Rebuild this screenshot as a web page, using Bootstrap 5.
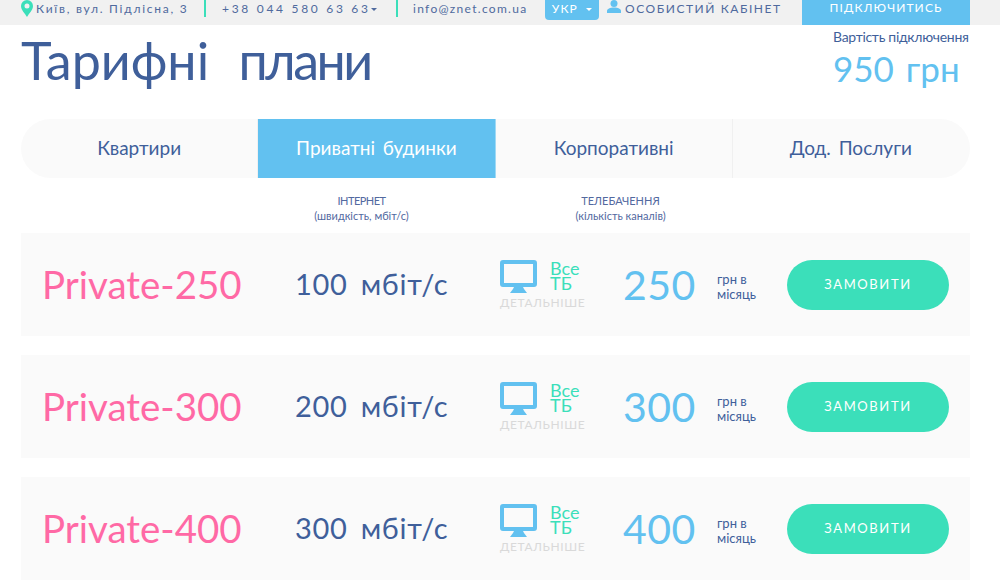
<!DOCTYPE html>
<html lang="uk">
<head>
    <meta charset="UTF-8">
    <title>Тарифні плани</title>
    <link href="https://cdn.jsdelivr.net/npm/bootstrap@5.3.0/dist/css/bootstrap.min.css" rel="stylesheet">
    <style>
        body {
            background: #fff;
            font-family: 'Lato', 'Liberation Sans', sans-serif;
            color: #3f5f9a;
            overflow: hidden;
        }
        .top-strip {
            height: 25px;
            background: #f1f1f1;
            padding: 0 30px 0 21px;
            font-size: 12px;
            line-height: 17px;
            color: #4f6a9e;
        }
        .top-addr { letter-spacing: 1.75px; width: 168px; margin-left: 3px; white-space: nowrap; }
        .top-sep { width: 2px; height: 17px; background: #3bdfba; }
        .top-phone { letter-spacing: 2.7px; margin-left: 16px; width: 174px; white-space: nowrap; }
        .top-mail { letter-spacing: 1.3px; margin-left: 15px; width: 132px; white-space: nowrap; }
        .caret-small { display: inline-block; border: 3.5px solid transparent; border-top-color: currentColor; border-bottom: 0; vertical-align: middle; }
        .lang-btn {
            width: 54px; height: 20px; padding: 0 0 3px; border: 0; border-radius: 0 0 4px 4px;
            background: #62c1f0; color: #fff; font-size: 12px; letter-spacing: 1.2px; line-height: 16px;
        }
        .cabinet { letter-spacing: 1.55px; margin-left: 4px; width: 177px; white-space: nowrap; }
        .connect-btn {
            width: 168px; height: 25px; padding: 0 0 9px; border: 0; border-radius: 0;
            background: #62c1f0; color: #fff; font-size: 12px; letter-spacing: 1.1px; line-height: 16px;
        }
        .page-wrap { padding: 0 30px 0 21px; }
        .head-row { height: 94px; }
        .page-title { font-size: 52px; font-weight: 400; line-height: 70px; margin: 0; word-spacing: 16px; color: #3f5f9a; white-space: nowrap; }
        .title-tail { letter-spacing: -2.500px; }
        .price-box { width: 137px; padding-top: 3px; }
        .price-label { font-size: 14px; letter-spacing: -.3px; line-height: 18px; white-space: nowrap; }
        .price-value { font-size: 35px; line-height: 44px; color: #62c1f0; word-spacing: 3px; white-space: nowrap; }
        .plan-tabs { height: 59px; background: #fafafa; border-radius: 30px; overflow: hidden; }
        .plan-tab { flex: 1 1 0; font-size: 19px; color: #3f5f9a; word-spacing: 3px; border-right: 1px solid #f0f0f0; }
        .plan-tab:last-child { border-right-color: transparent; }
        .plan-tab.on { background: #62c1f0; color: #fff; border-right-color: #9fd9f5; }
        .cols-head { height: 55px; padding-top: 15px; font-size: 11px; line-height: 15px; text-align: center; color: #52699f; }
        .cols-net { width: 155px; margin-left: 263px; }
        .cols-net-top { letter-spacing: -.5px; }
        .cols-tv { width: 155px; margin-left: 104px; }
        .plan-row { height: 103px; background: #fafafa; margin-bottom: 19px; }
        .plan-name { width: 252px; padding-left: 21px; font-size: 38.500px; color: #ff69a5; white-space: nowrap; }
        .plan-speed { width: 227px; font-size: 29px; padding: 0 0 2px 22px; letter-spacing: .7px; word-spacing: 5px; white-space: nowrap; }
        .tv-box { width: 123px; padding-bottom: 4px; }
        .tv-top { height: 42px; }
        .tv-all { font-size: 18px; line-height: 15px; color: #3bdfba; margin-left: 13px; }
        .tv-more { font-size: 12px; line-height: 14px; color: #d9d9d9; letter-spacing: .6px; margin-top: -1px; }
        .plan-price { width: 94px; font-size: 41px; color: #62c1f0; letter-spacing: .5px; white-space: nowrap; }
        .plan-unit { width: 70px; padding-top: 4px; font-size: 13px; line-height: 15px; color: #3f5f9a; }
        .order-btn {
            width: 162px; height: 50px; margin-top: 1px; padding: 0; border: 0; border-radius: 25px;
            background: #3bdfba; color: #fff; font-size: 13px; letter-spacing: 1.6px;
        }
        .order-btn:hover { background: #2fcaa7; color: #fff; }
    </style>
</head>
<body>
    <div class="top-strip d-flex align-items-start">
        <svg width="12" height="17" viewBox="0 0 12 17" class="flex-shrink-0"><path fill="#3bdfba" fill-rule="evenodd" d="M6 0a6 6 0 0 1 6 6c0 4-4 7.500-6 11C4 13.500 0 10 0 6a6 6 0 0 1 6-6zm0 3.500a2.500 2.500 0 1 0 0 5 2.500 2.500 0 0 0 0-5z"/></svg>
        <div class="top-addr">Київ, вул. Підлісна, 3</div>
        <div class="top-sep"></div>
        <div class="top-phone">+38 044 580 63 63<span class="caret-small"></span></div>
        <div class="top-sep"></div>
        <div class="top-mail">info@znet.com.ua</div>
        <button class="btn lang-btn" type="button">УКР <span class="caret-small ms-1"></span></button>
        <svg width="14" height="13" viewBox="0 0 14 13" class="ms-2 flex-shrink-0"><circle cx="7" cy="3.500" r="3.500" fill="#62c1f0"/><path fill="#62c1f0" d="M0 13v-2c0-2 3-3.500 7-3.500s7 1.500 7 3.500v2z"/></svg>
        <div class="cabinet">ОСОБИСТИЙ КАБІНЕТ</div>
        <button class="btn connect-btn" type="button">ПІДКЛЮЧИТИСЬ</button>
    </div>

    <div class="page-wrap">
        <div class="head-row d-flex justify-content-between">
            <h1 class="page-title">Тарифні <span class="title-tail">плани</span></h1>
            <div class="price-box">
                <div class="price-label">Вартість підключення</div>
                <div class="price-value">950 грн</div>
            </div>
        </div>

        <div class="plan-tabs d-flex">
            <div class="plan-tab d-flex align-items-center justify-content-center">Квартири</div>
            <div class="plan-tab on d-flex align-items-center justify-content-center">Приватні будинки</div>
            <div class="plan-tab d-flex align-items-center justify-content-center">Корпоративні</div>
            <div class="plan-tab d-flex align-items-center justify-content-center">Дод. Послуги</div>
        </div>

        <div class="cols-head d-flex">
            <div class="cols-net"><span class="cols-net-top">ІНТЕРНЕТ</span><br>(швидкість, мбіт/с)</div>
            <div class="cols-tv">ТЕЛЕБАЧЕННЯ<br>(кількість каналів)</div>
        </div>

        <div class="plan-row d-flex align-items-center">
            <div class="plan-name">Private-250</div>
            <div class="plan-speed">100 мбіт/с</div>
            <div class="tv-box">
                <div class="tv-top d-flex align-items-center">
                    <svg width="37" height="33" viewBox="0 0 37 33"><path fill="#62c1f0" fill-rule="evenodd" d="M3 0h31a3 3 0 0 1 3 3v21a3 3 0 0 1-3 3H23l1 2 3 4H10l3-4 1-2H3a3 3 0 0 1-3-3V3a3 3 0 0 1 3-3zm1 4v19h29V4z"/></svg>
                    <div class="tv-all">Все<br>ТБ</div>
                </div>
                <div class="tv-more">ДЕТАЛЬНІШЕ</div>
            </div>
            <div class="plan-price">250</div>
            <div class="plan-unit">грн в<br>місяць</div>
            <button class="btn order-btn" type="button">ЗАМОВИТИ</button>
        </div>

        <div class="plan-row d-flex align-items-center">
            <div class="plan-name">Private-300</div>
            <div class="plan-speed">200 мбіт/с</div>
            <div class="tv-box">
                <div class="tv-top d-flex align-items-center">
                    <svg width="37" height="33" viewBox="0 0 37 33"><path fill="#62c1f0" fill-rule="evenodd" d="M3 0h31a3 3 0 0 1 3 3v21a3 3 0 0 1-3 3H23l1 2 3 4H10l3-4 1-2H3a3 3 0 0 1-3-3V3a3 3 0 0 1 3-3zm1 4v19h29V4z"/></svg>
                    <div class="tv-all">Все<br>ТБ</div>
                </div>
                <div class="tv-more">ДЕТАЛЬНІШЕ</div>
            </div>
            <div class="plan-price">300</div>
            <div class="plan-unit">грн в<br>місяць</div>
            <button class="btn order-btn" type="button">ЗАМОВИТИ</button>
        </div>

        <div class="plan-row d-flex align-items-center">
            <div class="plan-name">Private-400</div>
            <div class="plan-speed">300 мбіт/с</div>
            <div class="tv-box">
                <div class="tv-top d-flex align-items-center">
                    <svg width="37" height="33" viewBox="0 0 37 33"><path fill="#62c1f0" fill-rule="evenodd" d="M3 0h31a3 3 0 0 1 3 3v21a3 3 0 0 1-3 3H23l1 2 3 4H10l3-4 1-2H3a3 3 0 0 1-3-3V3a3 3 0 0 1 3-3zm1 4v19h29V4z"/></svg>
                    <div class="tv-all">Все<br>ТБ</div>
                </div>
                <div class="tv-more">ДЕТАЛЬНІШЕ</div>
            </div>
            <div class="plan-price">400</div>
            <div class="plan-unit">грн в<br>місяць</div>
            <button class="btn order-btn" type="button">ЗАМОВИТИ</button>
        </div>
    </div>

    <script src="https://cdn.jsdelivr.net/npm/bootstrap@5.3.0/dist/js/bootstrap.bundle.min.js"></script>
</body>
</html>
